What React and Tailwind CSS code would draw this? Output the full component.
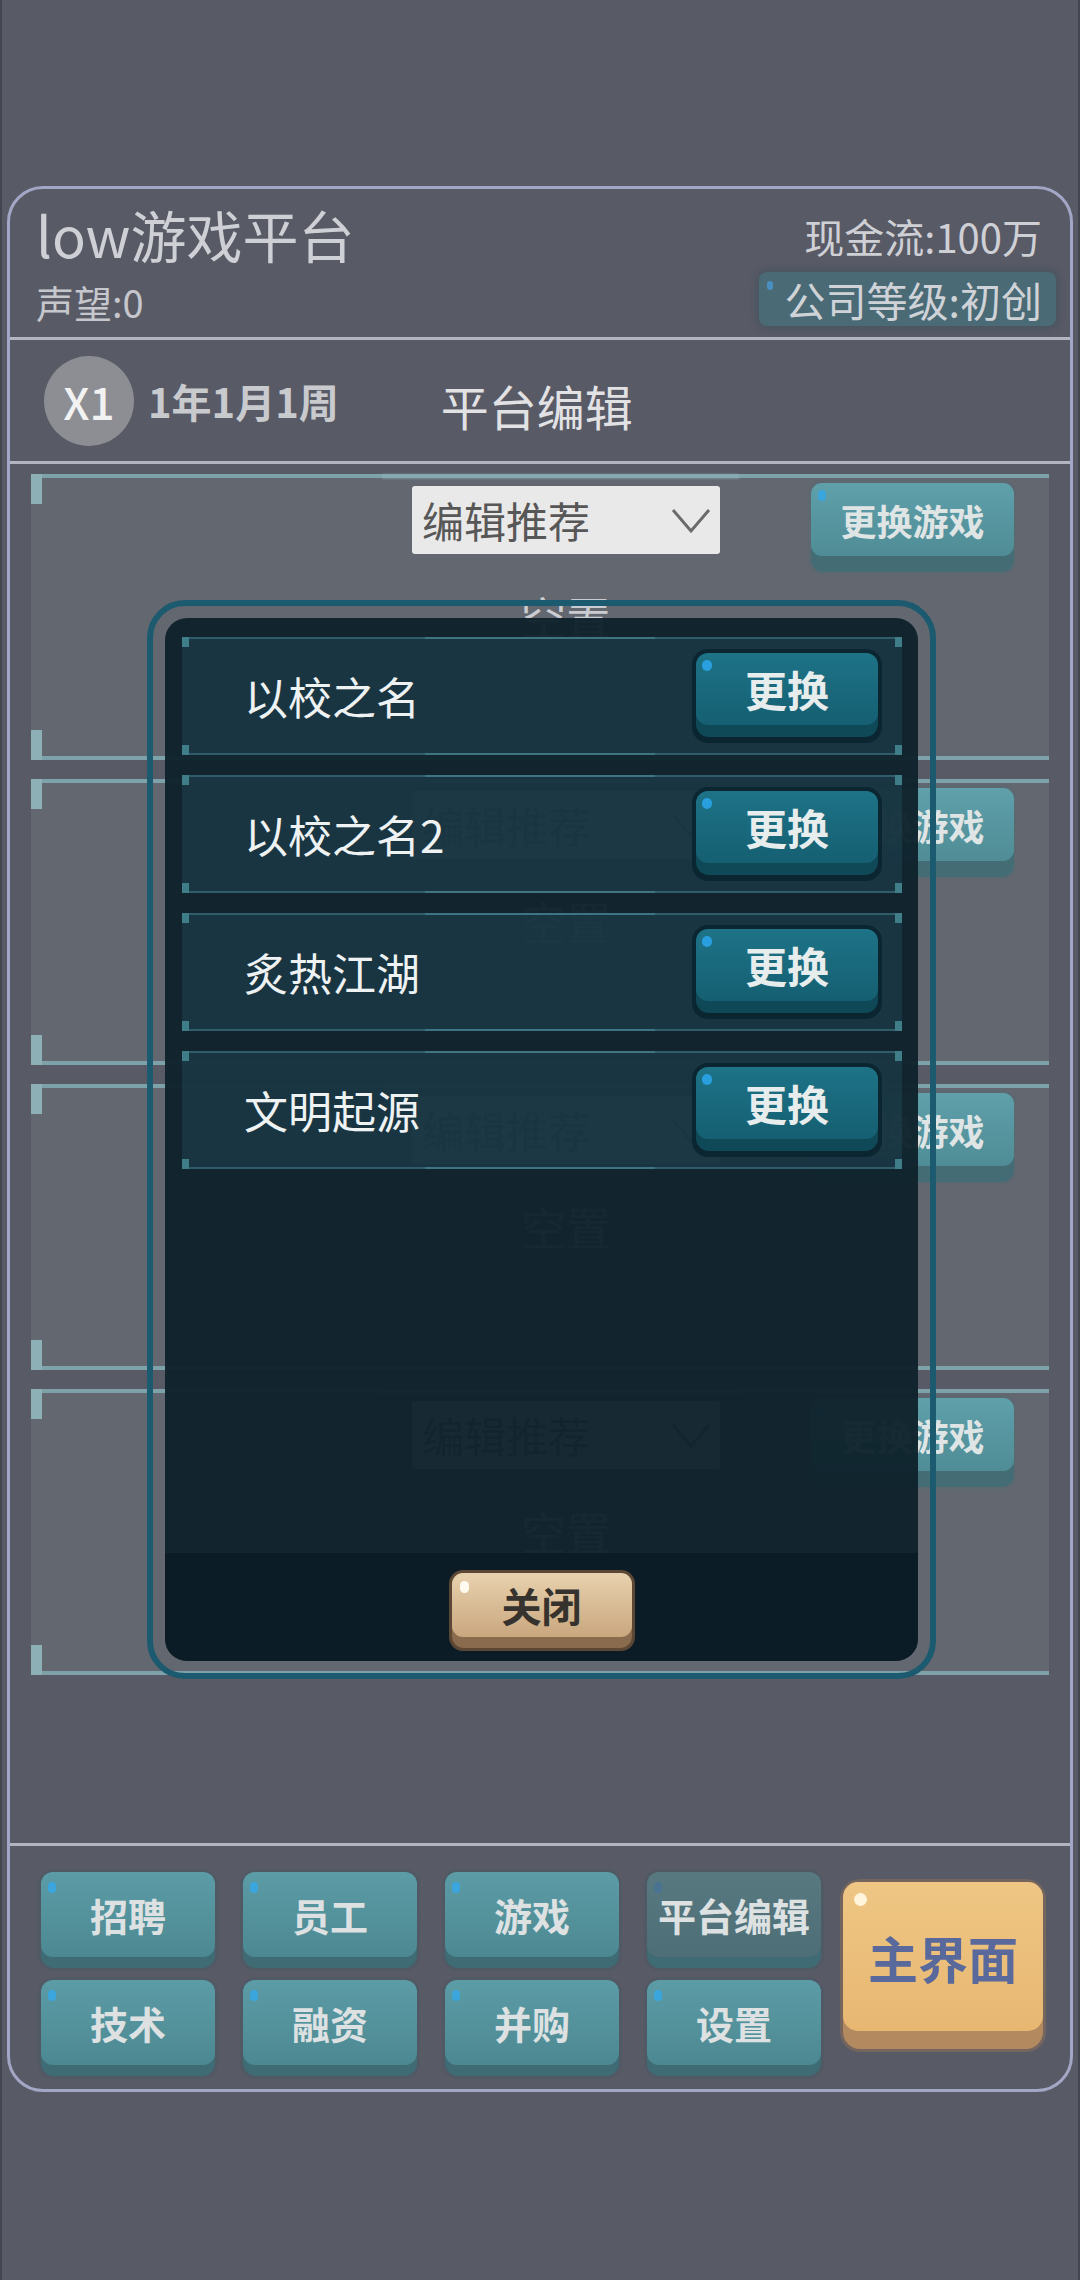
import React from "react";

const games = ["以校之名", "以校之名2", "炙热江湖", "文明起源"];

const menuTop = [
  { label: "招聘" },
  { label: "员工" },
  { label: "游戏" },
  { label: "平台编辑", dim: true },
];
const menuBottom = [{ label: "技术" }, { label: "融资" }, { label: "并购" }, { label: "设置" }];

export default function App() {
  return (
    <div className="relative w-[1080px] h-[2280px] overflow-hidden bg-[#585a66] border-x-2 border-[#44464f] pt-[186px] px-[5px] font-['Noto_Sans_CJK_SC','Noto_Sans',sans-serif]">
      {/* main frame */}
      <div className="h-[1906px] rounded-[36px] border-[3px] border-[#a3a6c5] flex flex-col">
        {/* header */}
        <div className="h-[148px] flex justify-between">
          <div className="pl-[26px] pt-[17px]">
            <div className="text-[56px] leading-none text-[#cfd0d5]">low游戏平台</div>
            <div className="mt-[21px] text-[38px] leading-none text-[#c6c7cc]">声望:0</div>
          </div>
          <div className="pr-[14px] pt-[27px] flex flex-col items-end">
            <div className="mr-[14px] text-[40px] leading-none text-[#cfd0d5]">现金流:100万</div>
            <div className="relative mt-[16px] h-[54px] rounded-[8px] bg-[#4a6a76] shadow-[0_0_6px_2px_rgba(60,80,90,0.6)] pl-[26px] pr-[14px] flex items-center">
              <span className="text-[41px] leading-none text-[#cfd3d7]">公司等级:初创</span>
              <span className="absolute left-[8px] top-[9px] w-[6px] h-[9px] rounded-full bg-[#4b8fc0]" />
            </div>
          </div>
        </div>
        <div className="h-[3px] bg-[#b2b4c0]" />

        {/* date row */}
        <div className="h-[121px] flex items-center">
          <div className="ml-[34px] w-[90px] h-[90px] rounded-full bg-[#8d8e93] flex items-center justify-center">
            <span className="text-[44px] font-medium leading-none text-[#f2f2f2]">X1</span>
          </div>
          <span className="ml-[14px] text-[40px] leading-none font-semibold text-[#c9cace]">1年1月1周</span>
          <span className="ml-[102px] mt-[8px] text-[48px] leading-none text-[#e2e2e4]">平台编辑</span>
        </div>
        <div className="h-[3px] bg-[#b2b4c0]" />

        {/* slots */}
        <div className="pt-[10px] px-[21px] flex flex-col gap-[19px]">
          {[0, 1, 2, 3].map((i) => (
            <Slot key={i} />
          ))}
        </div>

        {/* bottom menu */}
        <div className="mt-auto h-[3px] bg-[#b2b4c0]" />
        <div className="h-[243px] pt-[26px] pl-[31px] flex items-start">
          <div className="grid grid-cols-[174px_174px_174px_174px] gap-x-[28px] gap-y-[12px]">
            {menuTop.map((m) => (
              <MenuButton key={m.label} label={m.label} dim={m.dim} />
            ))}
            {menuBottom.map((m) => (
              <MenuButton key={m.label} label={m.label} />
            ))}
          </div>
          <div className="ml-[22px] mt-[10px] relative w-[200px] h-[167px] rounded-[17px] bg-[#b38a60] pb-[18px] shadow-[0_0_0_3px_rgba(150,115,85,0.45)]">
            <div className="relative h-full rounded-[15px] bg-linear-to-b from-[#efc684] to-[#e7b772] flex items-center justify-center">
              <span className="text-[50px] font-bold leading-none text-[#5a699c]">主界面</span>
              <span className="absolute left-[11px] top-[11px] w-[13px] h-[13px] rounded-full bg-[#fff4dc]" />
            </div>
          </div>
        </div>
      </div>

      {/* modal */}
      <div className="absolute left-[145px] top-[600px] w-[789px] h-[1079px] rounded-[38px] border-[6px] border-[#1c5a70] p-[12px]">
        <div className="h-full rounded-[22px] overflow-hidden bg-[#10232c]/[0.97] flex flex-col">
          <div className="pt-[19px] pl-[17px] pr-[16px] flex flex-col gap-[20px]">
            {games.map((g) => (
              <GameRow key={g} name={g} />
            ))}
          </div>
          <div className="mt-auto h-[108px] bg-[#061620]/55 flex justify-center pt-[17px]">
            <div className="relative w-[186px] h-[81px] rounded-[14px] bg-[#5c4634] p-[3px]">
              <div className="h-full rounded-[12px] bg-[#8a6b4d] pb-[11px]">
                <div className="relative h-full rounded-[11px] bg-linear-to-b from-[#e8d2ae] to-[#c9a77f] flex items-center justify-center">
                  <span className="text-[40px] font-bold leading-none text-[#36322d]">关闭</span>
                  <span className="absolute left-[8px] top-[8px] w-[9px] h-[12px] rounded-full bg-[#fffaf0]" />
                </div>
              </div>
            </div>
          </div>
        </div>
      </div>
    </div>
  );
}

function Slot() {
  return (
    <div className="relative h-[286px] bg-[#626770] flex justify-end items-start pt-[9px] pr-[35px]">
      {/* frame lines */}
      <div className="absolute left-0 right-0 top-0 h-[4px] bg-[#7ea2a9]" />
      <div className="absolute left-[34.5%] w-[35%] top-0 h-[5px] bg-[#92b4ba]/50 blur-[1px]" />
      <div className="absolute left-0 right-0 bottom-0 h-[4px] bg-[#7ea2a9]" />
      <div className="absolute left-0 top-0 w-[11px] h-[30px] bg-[#8db0b6]" />
      <div className="absolute left-0 bottom-0 w-[11px] h-[30px] bg-[#8db0b6]" />

      <div className="mr-[91px] w-[308px] flex flex-col items-center">
        <div className="mt-[3px] w-full h-[68px] rounded-[3px] bg-[#e9e9e9] flex items-center justify-between pl-[10px] pr-[9px]">
          <span className="text-[42px] leading-none text-[#575757]">编辑推荐</span>
          <svg width="40" height="26" viewBox="0 0 40 26" className="mt-[2px]">
            <polyline points="2,2 20,23 38,2" fill="none" stroke="#6b6b6b" strokeWidth="3" />
          </svg>
        </div>
        <span className="mt-[40px] text-[45px] leading-none text-[#cbccd1]">空置</span>
      </div>

      <div className="relative w-[203px] h-[89px] rounded-[12px] bg-[#446c75] pb-[16px] shadow-[0_0_0_3px_rgba(85,105,115,0.35)]">
        <div className="relative h-full rounded-[11px] bg-linear-to-b from-[#5fa0aa] to-[#4f8c96] flex items-center justify-center">
          <span className="text-[36px] font-bold leading-none text-[#dfe4e5]">更换游戏</span>
          <span className="absolute left-[7px] top-[7px] w-[8px] h-[11px] rounded-full bg-[#3aa6dd]" />
        </div>
      </div>
    </div>
  );
}

function GameRow({ name }) {
  return (
    <div className="relative h-[118px] bg-[#24495a]/45 flex items-center justify-between pl-[62px] pr-[20px]">
      <div className="absolute left-0 right-0 top-0 h-[2px] bg-[#2f5d6b]" />
      <div className="absolute left-[33.75%] w-[32%] top-0 h-[2px] bg-[#3f7583]" />
      <div className="absolute left-0 right-0 bottom-0 h-[2px] bg-[#2f5d6b]" />
      <div className="absolute left-[33.75%] w-[32%] bottom-0 h-[2px] bg-[#3f7583]" />
      <div className="absolute left-0 top-0 w-[7px] h-[10px] bg-[#3f7d89]" />
      <div className="absolute right-0 top-0 w-[7px] h-[10px] bg-[#3f7d89]" />
      <div className="absolute left-0 bottom-0 w-[7px] h-[10px] bg-[#3f7d89]" />
      <div className="absolute right-0 bottom-0 w-[7px] h-[10px] bg-[#3f7d89]" />

      <span className="text-[44px] leading-none text-[#eef2f3]">{name}</span>

      <div className="relative w-[190px] h-[94px] rounded-[16px] bg-[#0b2630] px-[4px] pt-[4px] pb-[6px]">
        <div className="h-full rounded-[13px] bg-[#0f4857] pb-[12px]">
          <div className="relative h-full rounded-[12px] bg-linear-to-b from-[#1e7387] to-[#155f72] flex items-center justify-center">
            <span className="text-[42px] font-bold leading-none text-[#e7ecec]">更换</span>
            <span className="absolute left-[6px] top-[7px] w-[10px] h-[11px] rounded-full bg-[#2a9fe0]" />
          </div>
        </div>
      </div>
    </div>
  );
}

function MenuButton({ label, dim }) {
  return (
    <div className="relative h-[96px] rounded-[13px] bg-[#3f6b74] pb-[11px] shadow-[0_0_0_3px_rgba(70,90,100,0.35)]">
      <div
        className={
          dim
            ? "relative h-full rounded-[12px] bg-linear-to-b from-[#587980] to-[#4d6e76] flex items-center justify-center"
            : "relative h-full rounded-[12px] bg-linear-to-b from-[#5c9ca6] to-[#4c8892] flex items-center justify-center"
        }
      >
        <span className="text-[38px] font-bold leading-none text-[#dde1e2]">{label}</span>
        <span
          className={
            dim
              ? "absolute left-[7px] top-[10px] w-[8px] h-[11px] rounded-full bg-[#4a7391]"
              : "absolute left-[7px] top-[10px] w-[8px] h-[11px] rounded-full bg-[#3aa6dd]"
          }
        />
      </div>
    </div>
  );
}
